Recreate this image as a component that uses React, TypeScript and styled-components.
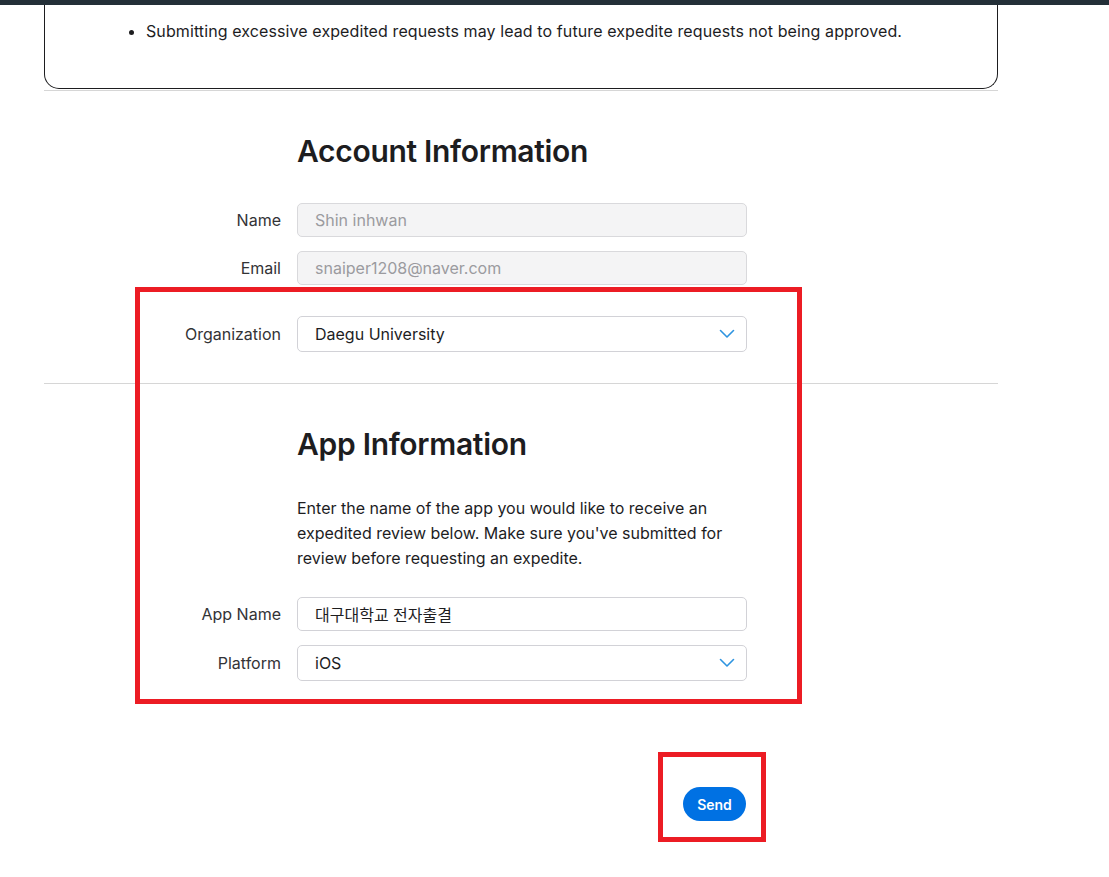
import React from "react";
import styled, { createGlobalStyle } from "styled-components";

const Global = createGlobalStyle`
  html, body { margin: 0; padding: 0; background: #fff; }
  body { font-family: Inter, "Noto Sans CJK KR", "Noto Sans", sans-serif; color: #1d1d1f; }
  * { box-sizing: border-box; }
`;

const Page = styled.div`
  position: relative;
  width: 1109px;
  height: 877px;
  overflow: hidden;
`;

const TopBar = styled.div`
  height: 5px;
  background: #232f38;
`;

const Content = styled.div`
  width: 954px;
  margin-left: 44px;
`;

const NoticeBox = styled.div`
  height: 84px;
  border: 1px solid #1d1d1f;
  border-top: none;
  border-radius: 0 0 15px 15px;
  padding: 15px 0 0 70px;
`;

const BulletList = styled.ul`
  margin: 0;
  padding: 0 0 0 31px;
  font-size: 16px;
  line-height: 22px;
  letter-spacing: 0.1px;
  color: #1d1d1f;
`;

const Divider = styled.div<{ $gap: number }>`
  height: 1px;
  background: #d6d6d6;
  margin-top: ${(p) => p.$gap}px;
`;

const Section = styled.section<{ $pt: number }>`
  padding-top: ${(p) => p.$pt}px;
`;

const Heading = styled.h2`
  margin: 0 0 0 253px;
  font-size: 30px;
  font-weight: 600;
  line-height: 40px;
  letter-spacing: -0.3px;
  color: #1d1d1f;
`;

const Intro = styled.p`
  margin: 32px 0 0 253px;
  width: 450px;
  font-size: 16px;
  line-height: 25px;
  color: #1d1d1f;
`;

const Row = styled.div<{ $mt: number }>`
  display: flex;
  align-items: center;
  gap: 16px;
  margin-top: ${(p) => p.$mt}px;
`;

const Label = styled.div`
  width: 237px;
  text-align: right;
  font-size: 16px;
  color: #333336;
`;

const Field = styled.div<{ $disabled?: boolean; $h?: number }>`
  position: relative;
  width: 450px;
  height: ${(p) => p.$h ?? 34}px;
  display: flex;
  align-items: center;
  padding: 0 16px 0 17px;
  border: 1px solid ${(p) => (p.$disabled ? "#d9d9dc" : "#d2d2d7")};
  border-radius: 5px;
  background: ${(p) => (p.$disabled ? "#f4f4f5" : "#fff")};
  color: ${(p) => (p.$disabled ? "#9b9b9f" : "#1d1d1f")};
  font-size: 16px;
`;

const Chevron = styled.svg`
  position: absolute;
  right: 11px;
  top: 50%;
  margin-top: -5px;
`;

const ButtonRow = styled.div`
  display: flex;
  justify-content: flex-end;
  width: 702px;
  margin-top: 106px;
`;

const SendButton = styled.button`
  width: 63px;
  height: 34px;
  border: none;
  border-radius: 17px;
  background: #0071e3;
  color: #fff;
  font-family: Inter, sans-serif;
  font-size: 14px;
  font-weight: 600;
`;

const Annotation = styled.div<{ $x: number; $y: number; $w: number; $h: number }>`
  position: absolute;
  left: ${(p) => p.$x}px;
  top: ${(p) => p.$y}px;
  width: ${(p) => p.$w}px;
  height: ${(p) => p.$h}px;
  border: 5px solid #ec1c24;
  pointer-events: none;
`;

const ChevronIcon = () => (
  <Chevron width="16" height="10" viewBox="0 0 16 10">
    <path d="M1.5 1.5 L8 8 L14.5 1.5" fill="none" stroke="#2e94e0" strokeWidth="1.6" strokeLinecap="round" strokeLinejoin="round" />
  </Chevron>
);

export default function App() {
  return (
    <Page>
      <Global />
      <TopBar />
      <Content>
        <NoticeBox>
          <BulletList>
            <li>Submitting excessive expedited requests may lead to future expedite requests not being approved.</li>
          </BulletList>
        </NoticeBox>
        <Divider $gap={1} />
        <Section $pt={40}>
          <Heading>Account Information</Heading>
          <Row $mt={32}>
            <Label>Name</Label>
            <Field $disabled>Shin inhwan</Field>
          </Row>
          <Row $mt={14}>
            <Label>Email</Label>
            <Field $disabled>snaiper1208@naver.com</Field>
          </Row>
          <Row $mt={31}>
            <Label>Organization</Label>
            <Field $h={36}>
              Daegu University
              <ChevronIcon />
            </Field>
          </Row>
        </Section>
        <Divider $gap={31} />
        <Section $pt={40}>
          <Heading>App Information</Heading>
          <Intro>
            Enter the name of the app you would like to receive an expedited review below. Make sure you've submitted for review before requesting an expedite.
          </Intro>
          <Row $mt={26}>
            <Label>App Name</Label>
            <Field>대구대학교 전자출결</Field>
          </Row>
          <Row $mt={14}>
            <Label>Platform</Label>
            <Field $h={36}>
              iOS
              <ChevronIcon />
            </Field>
          </Row>
          <ButtonRow>
            <SendButton>Send</SendButton>
          </ButtonRow>
        </Section>
      </Content>
      <Annotation $x={135} $y={287} $w={667} $h={417} />
      <Annotation $x={658} $y={752} $w={108} $h={90} />
    </Page>
  );
}
